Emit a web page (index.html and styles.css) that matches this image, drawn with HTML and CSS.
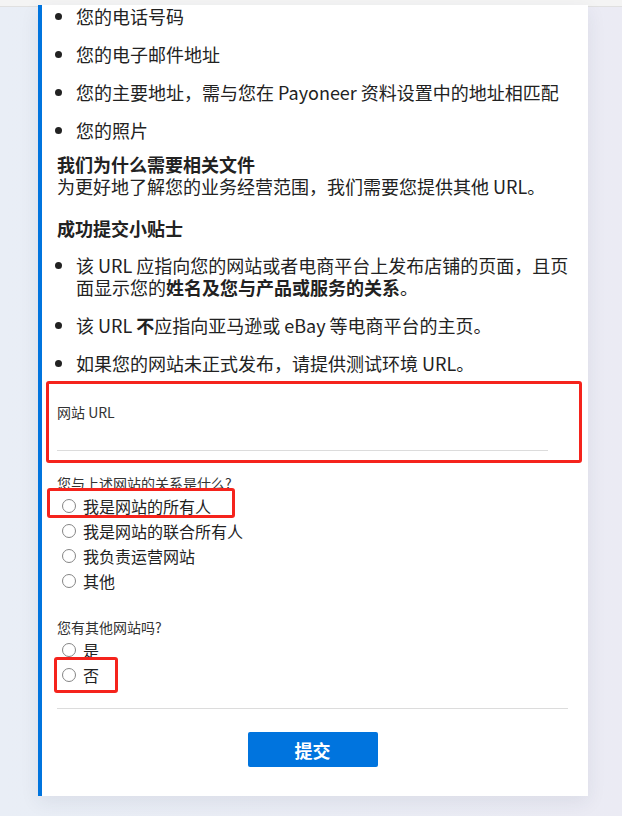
FILE: index.html
```html
<!DOCTYPE html>
<html>
<head>
    <title>网站验证</title>
    <link rel="stylesheet" href="styles.css">
</head>
<body>
    <div class="topbar"></div>
    <div class="page">
        <div class="card">
            <ul class="list first-list">
                <li>您的电话号码</li>
                <li>您的电子邮件地址</li>
                <li>您的主要地址，需与您在 Payoneer 资料设置中的地址相匹配</li>
                <li>您的照片</li>
            </ul>

            <h3 class="title">我们为什么需要相关文件</h3>
            <p class="text">为更好地了解您的业务经营范围，我们需要您提供其他 URL。</p>

            <h3 class="title tips">成功提交小贴士</h3>
            <ul class="list">
                <li>该 URL 应指向您的网站或者电商平台上发布店铺的页面，且页面显示您的<b>姓名及您与产品或服务的关系</b>。</li>
                <li>该 URL <b>不</b>应指向亚马逊或 eBay 等电商平台的主页。</li>
                <li>如果您的网站未正式发布，请提供测试环境 URL。</li>
            </ul>

            <div class="url-field">
                <label class="field-label" for="siteUrl">网站 URL</label>
                <input class="url-input" id="siteUrl" type="text">
            </div>

            <div class="question">
                <p class="question-label">您与上述网站的关系是什么?</p>
                <label class="option mark-owner"><input type="radio" name="relation">我是网站的所有人</label>
                <label class="option"><input type="radio" name="relation">我是网站的联合所有人</label>
                <label class="option"><input type="radio" name="relation">我负责运营网站</label>
                <label class="option"><input type="radio" name="relation">其他</label>
            </div>

            <div class="question second">
                <p class="question-label">您有其他网站吗?</p>
                <label class="option"><input type="radio" name="other">是</label>
                <label class="option mark-no"><input type="radio" name="other">否</label>
            </div>

            <hr class="divider">

            <div class="actions">
                <button class="submit">提交</button>
            </div>
        </div>
    </div>
</body>
</html>
```

FILE: styles.css
```css
html, body {
    margin: 0;
    padding: 0;
}
body {
    font-family: "Noto Sans CJK SC", "Noto Sans", sans-serif;
    color: #222;
    background: linear-gradient(to right, #e9eef6, #ebebf4);
    height: 816px;
    overflow: hidden;
}
.topbar {
    height: 6px;
    background: #f4f4f4;
    border-bottom: 1px solid #e0e0e0;
}
.page {
    padding-left: 38px;
}
.card {
    width: 515px;
    background: #fff;
    border-left: 4px solid #0074de;
    padding: 0 16px 29px 15px;
    box-shadow: 0 6px 18px rgba(40, 50, 80, 0.08);
}
.list {
    margin: 0;
    padding-left: 19px;
    font-size: 18px;
    line-height: 22px;
}
.list li {
    margin-bottom: 16px;
}
.list li:last-child {
    margin-bottom: 0;
}
.first-list {
    margin-top: -2px;
}
.title {
    margin: 12px 0 0;
    font-size: 18px;
    line-height: 22px;
    font-weight: bold;
}
.tips {
    margin-top: 20px;
    margin-bottom: 15px;
}
.text {
    margin: 0;
    font-size: 18px;
    line-height: 22px;
}
.url-field {
    margin: 7px -10px 0 -11px;
    padding: 18px 31px 9px 8px;
    border: 3px solid #f5231c;
    border-radius: 3px;
}
.field-label {
    display: block;
    font-size: 14px;
    line-height: 20px;
    color: #333;
}
.url-input {
    display: block;
    width: 100%;
    height: 29px;
    border: none;
    border-bottom: 1px solid #dcdcdc;
    padding: 0;
    outline: none;
    box-sizing: border-box;
}
.question {
    margin-top: 10px;
}
.question.second {
    margin-top: 24px;
}
.question-label {
    margin: 0;
    font-size: 14px;
    line-height: 20px;
    color: #333;
}
.option {
    display: flex;
    align-items: center;
    height: 25px;
    font-size: 16px;
    color: #222;
    position: relative;
}
.option input {
    appearance: none;
    width: 14px;
    height: 14px;
    margin: 0 7px 0 5px;
    border: 1.5px solid #858585;
    border-radius: 50%;
    box-sizing: border-box;
    background: #fff;
}
.mark-owner::after {
    content: "";
    position: absolute;
    left: -10px;
    top: -5px;
    width: 182px;
    height: 24px;
    border: 3px solid #f5231c;
    border-radius: 3px;
}
.mark-no::after {
    content: "";
    position: absolute;
    left: -3px;
    top: -5px;
    width: 58px;
    height: 30px;
    border: 3px solid #f5231c;
    border-radius: 3px;
}
.divider {
    margin: 21px 4px 0 0;
    border: none;
    border-top: 1px solid #dcdcdc;
}
.actions {
    display: flex;
    justify-content: center;
    margin-top: 23px;
    padding-right: 4px;
}
.submit {
    width: 130px;
    height: 35px;
    border: none;
    border-radius: 2px;
    background: #0074de;
    color: #fff;
    font-family: "Noto Sans CJK SC", sans-serif;
    font-size: 18px;
    font-weight: bold;
}
```
